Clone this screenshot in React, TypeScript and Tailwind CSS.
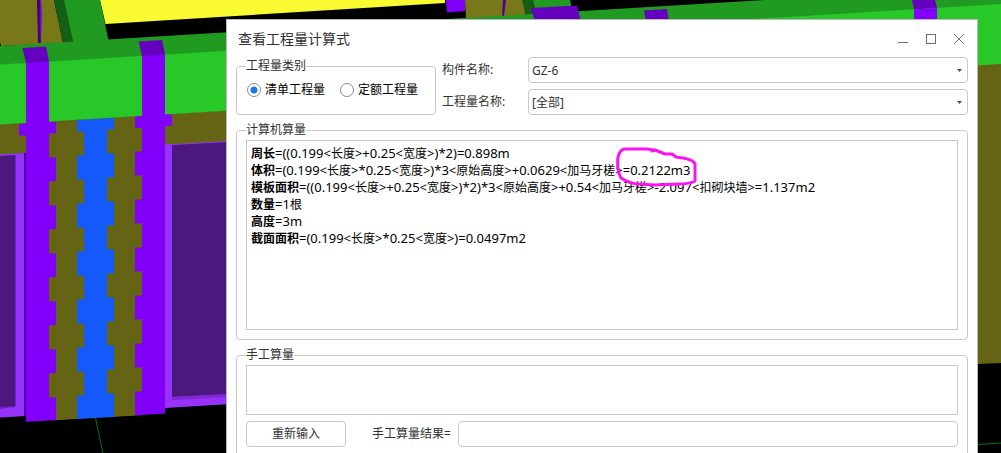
import { useState } from "react";

const formulas = [
  { name: "周长", expr: "=((0.199<长度>+0.25<宽度>)*2)=0.898m" },
  {
    name: "体积",
    expr: "=(0.199<长度>*0.25<宽度>)*3<原始高度>+0.0629<加马牙槎>",
    marked: "=0.2122m3",
  },
  {
    name: "模板面积",
    expr: "=((0.199<长度>+0.25<宽度>)*2)*3<原始高度>+0.54<加马牙槎>-2.097<扣砌块墙>=1.137m2",
  },
  { name: "数量", expr: "=1根" },
  { name: "高度", expr: "=3m" },
  { name: "截面面积", expr: "=(0.199<长度>*0.25<宽度>)=0.0497m2" },
];

const toothRows = [157, 205, 253, 301, 349, 397];

function ModelView() {
  return (
    <svg
      className="absolute inset-0 h-full w-full"
      viewBox="0 0 1001 453"
      preserveAspectRatio="xMinYMin slice"
      aria-hidden="true"
    >
      <rect width="1001" height="453" fill="#000" />

      {/* beams behind the wall */}
      <path d="M0 0H54L63 43L1 46L0 42Z" fill="#787818" />
      <path d="M37 0H40L41 43H38Z" fill="#41007d" />
      <path d="M40 0H41L42 15L41 40L40 30Z" fill="#7800e6" />
      <path d="M54 0H65L74 42L63 43Z" fill="#145f14" />
      <path d="M100 0H445V3L105.500 24Z" fill="#fafa32" />
      <path d="M446 0H465V11L447 12.500Z" fill="#8200fa" />
      <path d="M465 0H523L526 17L466 19Z" fill="#787818" />
      <path d="M503 0H506L504 16H502Z" fill="#4b0096" />
      <path d="M522 0H533L537 16H526Z" fill="#145f14" />

      {/* wall and ring beam */}
      <path d="M0 124L1001 63V363L978 364L226 404L0 417Z" fill="#646414" />
      <path d="M0 46L765 0H1001V5L0 65Z" fill="#209a20" />
      <path d="M64 0H100L109 43L74 45Z" fill="#209a20" />
      <path d="M533 0H570L573 14L537 18Z" fill="#209a20" />
      <path d="M0 64.500L1001 4V64L0 124.500Z" fill="#28c828" />

      {/* window frames */}
      <path d="M0 154.500L26 153V416L0 417.500Z" fill="#9632fa" />
      <path d="M0 156L15 155V407L0 408Z" fill="#4b197d" />
      <path d="M15 155H16V406L0 409V407L15 406Z" fill="#7323c3" />
      <path d="M24 153H26V416H24Z" fill="#5500a5" />
      <path d="M165 144.500L230 141V404L165 408Z" fill="#9632fa" />
      <path d="M172 145L230 142V394L172 397Z" fill="#4b197d" />
      <path d="M172 397L230 394V397L172 400Z" fill="#7d28d2" />

      {/* columns with toothed edges */}
      <path d="M56 122L142 117V415.500L56 420.500Z" fill="#646414" />
      <path d="M26 62.500L49 61V420.500L26 422Z" fill="#8200fa" />
      <path d="M142 55.500L165 54V413.500L142 415Z" fill="#8200fa" />
      <path d="M22.500 48L46 46.500L49 61.500L26 63Z" fill="#6400be" />
      <path d="M138.500 41.500L162 40L165 54.500L142 56Z" fill="#6400be" />
      <path d="M49 122H56V133.500H49V420H26V135.500H19V124L26 123.500V70H49Z" fill="#8200fa" />
      <path d="M49 134H56V157H49Z" fill="#646414" />
      <path d="M135 116.500L142 116V128H135Z" fill="#8200fa" />
      <path d="M165 114.500H172V126H165Z" fill="#8200fa" />
      <path d="M84 120L107 118.500V418L84 419Z" fill="#145afa" />
      <path d="M77 120L114 118V129.500H107V131.500H77Z" fill="#145afa" />
      {toothRows.map((y) => (
        <g key={y}>
          <rect x="49" y={y + 0.5} width="7" height="24" fill="#8200fa" />
          <rect x="49" y={y + 24.5} width="7" height="24" fill={y === 397 ? "#000" : "#646414"} />
          <rect x="77" y={y - 1.5} width="8" height="24" fill="#145afa" />
          <rect x="106" y={y - 3.5} width="8" height="24" fill="#145afa" />
          <rect x="135" y={y - 5.5} width="7" height="24" fill="#8200fa" />
        </g>
      ))}
      <path d="M26 422L165 414V424H26Z" fill="#000" />

      {/* columns cut by the dialog's top edge */}
      <path d="M531 8L577 5.500L581 22H535Z" fill="#6400be" />
      <path d="M644 10.500L667 9L669 22H646Z" fill="#6400be" />
      <path d="M912 0H935L937 8L914 9.500Z" fill="#6400be" />
      <path d="M914 9.500L937 8V22H914Z" fill="#8200fa" />

      <path d="M95.500 418L103 453M978 444.500L1001 443" stroke="#0a6e14" fill="none" />
    </svg>
  );
}

function PenMark() {
  return (
    <svg
      className="pointer-events-none absolute -left-2 -top-4 h-11 w-[84px] max-w-none"
      viewBox="0 0 84 44"
      fill="none"
      stroke="#fa14f0"
      strokeWidth="3"
      strokeLinecap="round"
      strokeLinejoin="round"
      aria-hidden="true"
    >
      <path d="M39 4L32 3H10C6 3 4 7 3 11C2 20 3 27 6 32C12 36 18 38 24 38L39 39L64 38C71 38 76 37 80 35V18C79 15 74 13 68 12L61 11L57 8L50 8L40 4L37 5" />
    </svg>
  );
}

// latin runs are set one size larger than the hanzi between them
function Expr({ text }: { text: string }) {
  return (
    <span className="text-[13px]">
      {text.split(/([\u4e00-\u9fff]+)/).map((part, i) =>
        i % 2 ? (
          <span key={i} className="text-xs leading-[17px]">
            {part}
          </span>
        ) : (
          part
        )
      )}
    </span>
  );
}

function SelectField({ id, label, options }: { id: string; label: string; options: string[] }) {
  return (
    <div className="flex items-center">
      <label htmlFor={id} className="w-[86px] shrink-0">
        {label}
      </label>
      <div className="relative min-w-0 flex-1">
        <select
          id={id}
          className="block h-[26px] w-full appearance-none rounded border border-[#c8c8c8] bg-white px-[3px] pt-px outline-none"
        >
          {options.map((o) => (
            <option key={o}>{o}</option>
          ))}
        </select>
        <svg
          className="pointer-events-none absolute right-1.5 top-3 h-[3px] w-[5px]"
          viewBox="0 0 5 3"
          fill="#414b5a"
          aria-hidden="true"
        >
          <path d="M0 0H5L2.500 3Z" />
        </svg>
      </div>
    </div>
  );
}

export default function App() {
  const [kind, setKind] = useState("清单工程量");
  const [manual, setManual] = useState("");
  const [result, setResult] = useState("");

  const reset = () => {
    setManual("");
    setResult("");
  };

  return (
    <div className="relative h-screen overflow-hidden bg-black pl-[226px] pr-[23px] pt-[19px] font-['Noto_Sans','Noto_Sans_CJK_SC',sans-serif] text-xs text-[#323232]">
      <ModelView />

      <div role="dialog" aria-labelledby="title" className="relative border border-[#b9b9b9] bg-white px-[9px] pb-[9px]">
        <header className="flex h-[37px] items-center justify-between pl-0.5 pr-1">
          <h1 id="title" className="text-sm">
            查看工程量计算式
          </h1>
          <div className="flex gap-[18px]">
            <button aria-label="最小化">
              <svg className="h-[10px] w-[10px]" viewBox="0 0 10 10" stroke="#6e6e6e" fill="none">
                <path d="M0 8.500H10" />
              </svg>
            </button>
            <button aria-label="最大化">
              <svg className="h-[10px] w-[10px]" viewBox="0 0 10 10" stroke="#6e6e6e" fill="none">
                <rect x="0.5" y="0.5" width="9" height="9" />
              </svg>
            </button>
            <button aria-label="关闭">
              <svg className="h-[10px] w-[10px]" viewBox="0 0 10 10" stroke="#787878" fill="none">
                <path d="M0 0L10 10M10 0L0 10" />
              </svg>
            </button>
          </div>
        </header>

        <div className="flex gap-1.5">
          <fieldset className="mt-px w-[200px] shrink-0 rounded border border-[#c8c8c8] px-[9px]">
            <legend className="leading-4">工程量类别</legend>
            <div className="flex h-8 items-center gap-[15px] pl-px text-black">
              {["清单工程量", "定额工程量"].map((k) => (
                <label key={k} className="flex items-center gap-1">
                  <input
                    type="radio"
                    name="kind"
                    checked={kind === k}
                    onChange={() => setKind(k)}
                    className="h-[14px] w-[14px] appearance-none rounded-full border border-[#8c8c8c] bg-white checked:bg-[radial-gradient(circle,#1e78e6_3px,white_4px)]"
                  />
                  {k}
                </label>
              ))}
            </div>
          </fieldset>

          <div className="flex min-w-0 flex-1 flex-col gap-1.5">
            <SelectField id="component" label="构件名称:" options={["GZ-6"]} />
            <SelectField id="quantity" label="工程量名称:" options={["[全部]"]} />
          </div>
        </div>

        <fieldset className="mt-[7px] min-w-0 rounded border border-[#c8c8c8] px-[9px] pb-[9px] pt-0.5">
          <legend className="leading-4">计算机算量</legend>
          <div className="min-h-[190px] border border-[#c8c8c8] p-1 leading-[17px] text-black">
            {formulas.map((f) => (
              <p key={f.name} className="h-[17px] whitespace-nowrap">
                <b>{f.name}</b>
                <Expr text={f.expr} />
                {f.marked && (
                  <span className="relative z-10">
                    <Expr text={f.marked} />
                    <PenMark />
                  </span>
                )}
              </p>
            ))}
          </div>
        </fieldset>

        <fieldset className="mt-[7px] min-w-0 rounded border border-[#c8c8c8] px-[9px] pb-[9px] pt-0.5">
          <legend className="leading-4">手工算量</legend>
          <textarea
            aria-label="手工算量"
            value={manual}
            onChange={(e) => setManual(e.target.value)}
            className="block h-[50px] w-full resize-none border border-[#c8c8c8] px-1 outline-none"
          />
          <div className="mt-1.5 flex items-center">
            <button onClick={reset} className="h-[26px] w-[100px] rounded border border-[#c8c8c8] bg-white">
              重新输入
            </button>
            <label htmlFor="result" className="ml-[26px] w-[86px] shrink-0">
              手工算量结果=
            </label>
            <input
              id="result"
              value={result}
              onChange={(e) => setResult(e.target.value)}
              className="h-[26px] min-w-0 flex-1 rounded border border-[#c8c8c8] px-1 outline-none"
            />
          </div>
        </fieldset>
      </div>
    </div>
  );
}
